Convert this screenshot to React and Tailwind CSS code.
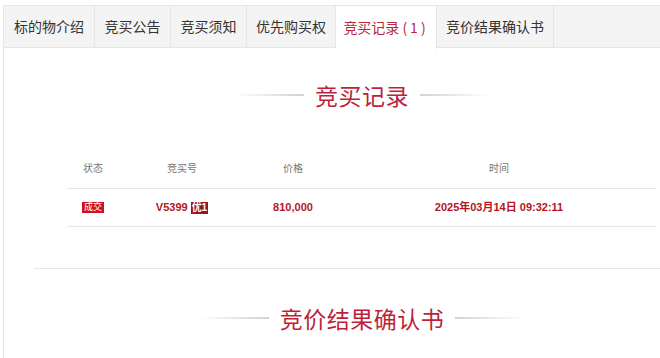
import React from 'react';

const tabs = [
    { label: '标的物介绍', w: 'w-[91px]' },
    { label: '竞买公告', w: 'w-[76px]' },
    { label: '竞买须知', w: 'w-[76px]' },
    { label: '优先购买权', w: 'w-[89px]' },
    { label: '竞买记录', w: 'w-[101px]', active: true },
    { label: '竞价结果确认书', w: 'w-[117px]' },
];

const SectionTitle = ({ text }) => (
    <div className="ml-[63px] w-[590px] flex items-center justify-center gap-[11px] h-[32px]">
        <div className="w-[70px] h-[2px] bg-gradient-to-r from-transparent to-[#d2d2d2]" />
        <h2 className="text-[23px] leading-[32px] text-[#bf1f3b] tracking-[0.5px]">{text}</h2>
        <div className="w-[70px] h-[2px] bg-gradient-to-l from-transparent to-[#d2d2d2]" />
    </div>
);

const App = () => {
    return (
        <div
            className="w-[660px] h-[358px] overflow-hidden bg-white pt-[5px]"
            style={{ fontFamily: '"Noto Sans CJK SC", "Noto Sans", sans-serif' }}
        >
            <div className="ml-[3px] border-l border-[#e6e6e6] h-full">
                {/* Tabs */}
                <div className="flex h-[43px] bg-[#f4f4f4] border-t border-b border-[#e6e6e6]">
                    {tabs.map(t => (
                        <div
                            key={t.label}
                            className={`${t.w} flex items-center justify-center text-[14px] border-r border-[#e6e6e6] ${t.active ? 'bg-white text-[#b8283c] h-[43px]' : 'text-[#333]'}`}
                        >
                            {t.label}
                            {t.active && <span className="ml-[3px] tracking-[3px]">(1)</span>}
                        </div>
                    ))}
                </div>

                <div className="pt-[31px]">
                    <SectionTitle text="竞买记录" />

                    {/* Records table */}
                    <div className="ml-[63px] w-[590px] mt-[37px]" style={{ fontFamily: 'Arial, "Liberation Sans", "Noto Sans CJK SC", sans-serif' }}>
                        <div className="flex h-[41px] items-center border-b border-[#e8e8e8] text-[10px] text-[#777]">
                            <div className="w-[52px] text-center">状态</div>
                            <div className="w-[126px] text-center">竞买号</div>
                            <div className="w-[96px] text-center">价格</div>
                            <div className="w-[316px] text-center">时间</div>
                        </div>
                        <div className="flex h-[38px] items-center border-b border-[#e8e8e8] text-[11px] font-bold text-[#b3161f]">
                            <div className="w-[52px] flex justify-center">
                                <span className="bg-[#d0121b] text-white text-[9px] font-normal leading-[11px] px-[2px]">成交</span>
                            </div>
                            <div className="w-[126px] flex justify-center items-center gap-[3px]">
                                <span>V5399</span>
                                <span className="bg-[#9a1414] text-white text-[10px] leading-[12px] px-[1px]">优1</span>
                            </div>
                            <div className="w-[96px] text-center">810,000</div>
                            <div className="w-[316px] text-center">2025年03月14日 09:32:11</div>
                        </div>
                    </div>

                    <div className="ml-[30px] mt-[41px] border-t border-[#e6e6e6]" />

                    <div className="mt-[33px]">
                        <SectionTitle text="竞价结果确认书" />
                    </div>
                </div>
            </div>
        </div>
    );
};

export default App;
